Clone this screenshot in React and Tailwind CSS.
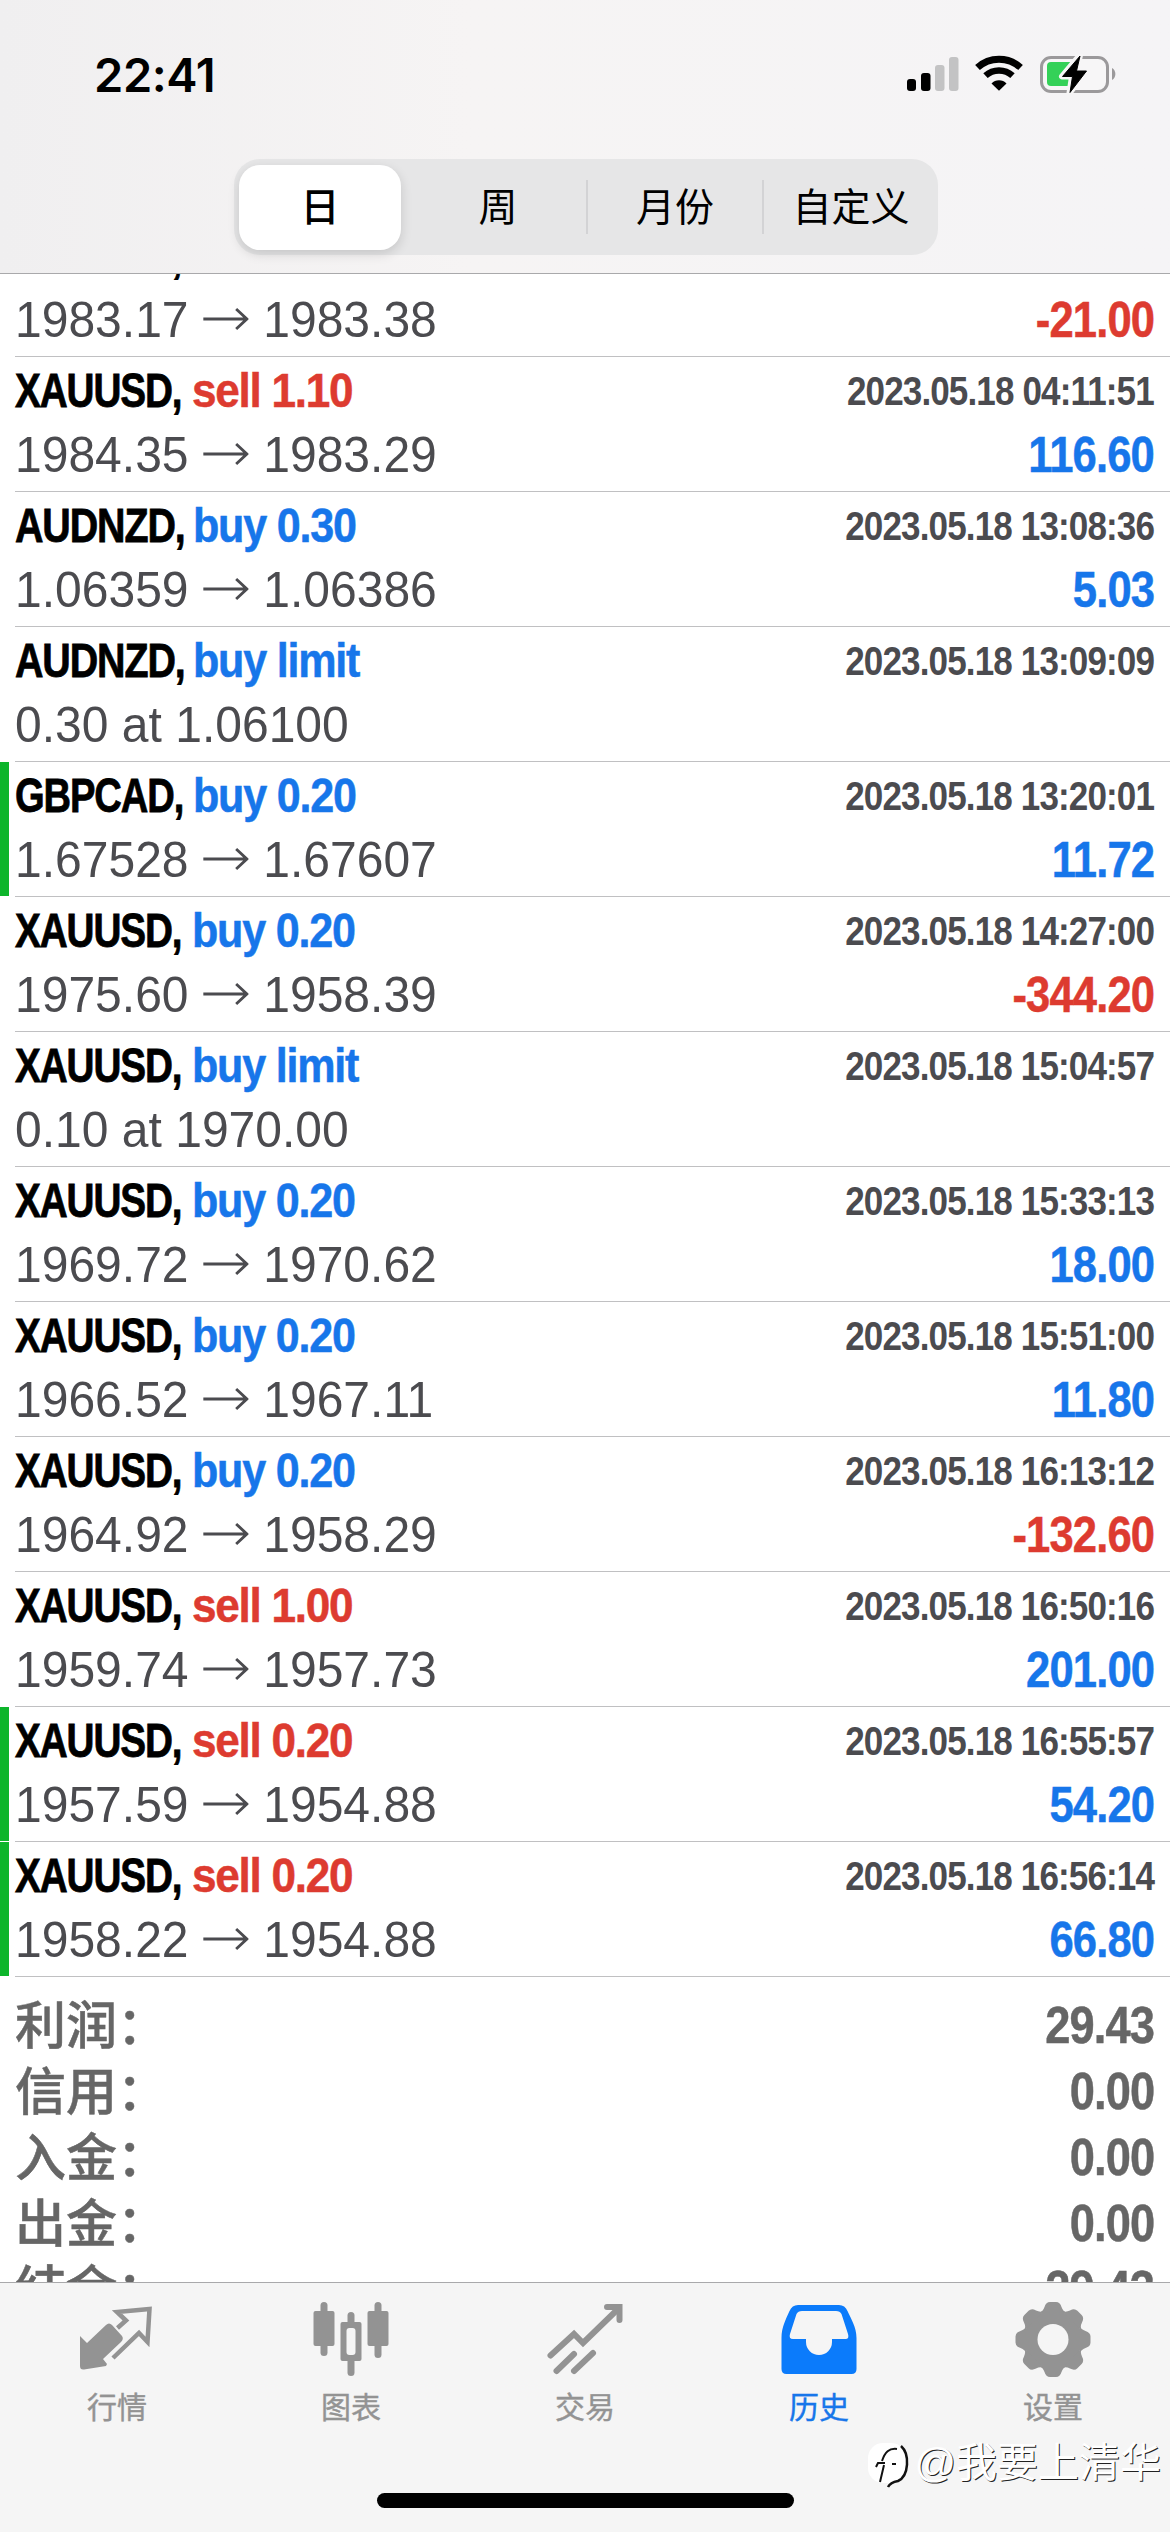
const trades = [
  { symbol: 'XAUUSD', side: 'sell', volume: '1.00', detail: ['1983.17', '1983.38'], time: '2023.05.18 04:10:12', profit: '-21.00' },
  { symbol: 'XAUUSD', side: 'sell', volume: '1.10', detail: ['1984.35', '1983.29'], time: '2023.05.18 04:11:51', profit: '116.60' },
  { symbol: 'AUDNZD', side: 'buy', volume: '0.30', detail: ['1.06359', '1.06386'], time: '2023.05.18 13:08:36', profit: '5.03' },
  { symbol: 'AUDNZD', side: 'buy', volume: 'limit', detail: ['0.30 at 1.06100'], time: '2023.05.18 13:09:09' },
  { symbol: 'GBPCAD', side: 'buy', volume: '0.20', detail: ['1.67528', '1.67607'], time: '2023.05.18 13:20:01', profit: '11.72', marked: true },
  { symbol: 'XAUUSD', side: 'buy', volume: '0.20', detail: ['1975.60', '1958.39'], time: '2023.05.18 14:27:00', profit: '-344.20' },
  { symbol: 'XAUUSD', side: 'buy', volume: 'limit', detail: ['0.10 at 1970.00'], time: '2023.05.18 15:04:57' },
  { symbol: 'XAUUSD', side: 'buy', volume: '0.20', detail: ['1969.72', '1970.62'], time: '2023.05.18 15:33:13', profit: '18.00' },
  { symbol: 'XAUUSD', side: 'buy', volume: '0.20', detail: ['1966.52', '1967.11'], time: '2023.05.18 15:51:00', profit: '11.80' },
  { symbol: 'XAUUSD', side: 'buy', volume: '0.20', detail: ['1964.92', '1958.29'], time: '2023.05.18 16:13:12', profit: '-132.60' },
  { symbol: 'XAUUSD', side: 'sell', volume: '1.00', detail: ['1959.74', '1957.73'], time: '2023.05.18 16:50:16', profit: '201.00' },
  { symbol: 'XAUUSD', side: 'sell', volume: '0.20', detail: ['1957.59', '1954.88'], time: '2023.05.18 16:55:57', profit: '54.20', marked: true },
  { symbol: 'XAUUSD', side: 'sell', volume: '0.20', detail: ['1958.22', '1954.88'], time: '2023.05.18 16:56:14', profit: '66.80', marked: true },
]

const totals = [
  ['利润', '29.43'],
  ['信用', '0.00'],
  ['入金', '0.00'],
  ['出金', '0.00'],
  ['结余', '29.43'],
]

const periods = ['日', '周', '月份', '自定义']

// squeeze of each symbol so they all take the same condensed width
const symbolStyles = {
  XAUUSD: 'w-[177px] scale-x-[0.79]',
  AUDNZD: 'w-[178px] scale-x-[0.805]',
  GBPCAD: 'w-[178px] scale-x-[0.778]',
}

function StatusBar() {
  return (
    <div className="h-[159px] shrink-0 flex justify-between pl-[94px] pr-[54px] pt-[46px]">
      <span className="font-['Inter',sans-serif] font-semibold text-[47px] leading-[58px] tracking-[-0.4px] text-black">22:41</span>
      <svg width="210" height="40" viewBox="0 0 210 40" className="mt-[8px]">
        <rect x="1" y="25" width="9" height="12" rx="3" />
        <rect x="15" y="19" width="9.5" height="18" rx="3" />
        <rect x="29" y="11" width="9.5" height="26" rx="3" fill="#c3c3c4" />
        <rect x="43" y="3" width="9.5" height="34" rx="3" fill="#c3c3c4" />
        <path d="M71.5 13.5 A32 32 0 0 1 114.5 13.5" fill="none" stroke="#000" strokeWidth="7" />
        <path d="M79.5 21.7 A20 20 0 0 1 106.5 21.7" fill="none" stroke="#000" strokeWidth="6.5" />
        <path d="M93 36.8 L85.5 29.5 A10.5 10.5 0 0 1 100.5 29.5 Z" />
        <rect x="135.5" y="3.5" width="66" height="34" rx="9.5" fill="#f7f6f7" stroke="#9b999b" strokeWidth="3" />
        <path d="M206 14 a7 7 0 0 1 0 12 z" fill="#9b999b" />
        <path d="M145 8 H164 V32 H145 a4 4 0 0 1 -4 -4 V12 a4 4 0 0 1 4 -4 z" fill="#34d158" />
        <path d="M174 1 L156 22.5 H166 L163.5 39 L181 16.5 H171 Z" stroke="#f7f6f7" strokeWidth="6" strokeLinejoin="round" />
        <path d="M174 2 L156.5 22.5 H166.5 L164 38.5 L180.5 17 H170.5 Z" stroke="#000" strokeLinejoin="round" />
      </svg>
    </div>
  )
}

function PeriodTabs() {
  return (
    <div className="w-[704px] h-24 ml-[234px] flex rounded-[26px] bg-[#e6e6e7]">
      {periods.map((period, i) => (
        <div key={period} className="flex-1 flex items-center">
          {i === 0 ? (
            <div className="w-[162px] h-[85px] ml-[5px] rounded-[21px] bg-white flex items-center justify-center shadow-[0_4px_12px_rgba(0,0,0,0.14)]">
              <span className="pt-[3px] text-[39px] font-medium text-black">{period}</span>
            </div>
          ) : (
            <>
              <div className={i > 1 ? 'w-0.5 h-[54px] bg-[#d3d3d5]' : 'w-0'} />
              <span className="flex-1 pt-[3px] text-center text-[39px] text-black">{period}</span>
            </>
          )}
        </div>
      ))}
    </div>
  )
}

function Trade({ trade }) {
  const { symbol, side, volume, detail, time, profit, marked } = trade
  return (
    <div className="relative h-[135px] shrink-0 pl-[15px]">
      {marked && <div className="absolute left-0 top-0 w-[9px] h-[134px] bg-[#0db52b]" />}
      <div className="h-[135px] pr-4 border-b border-[#c0c0c2] flex justify-between whitespace-nowrap">
        <div className="pt-1.5">
          <div className="flex h-[63px] leading-[54px] text-[49px] font-bold tracking-[-1.4px]">
            <span className={`text-black origin-left [-webkit-text-stroke:0.8px_#000] ${symbolStyles[symbol]}`}>{symbol},</span>
            <span
              className={side === 'sell'
                ? 'origin-left scale-x-[0.9] text-[#dd3b30] [-webkit-text-stroke:0.5px_#dd3b30]'
                : 'origin-left scale-x-[0.88] text-[#1776ea] [-webkit-text-stroke:0.5px_#1776ea]'}
            >
              {side} {volume}
            </span>
          </div>
          <div className="flex items-center h-[58px] text-[49.5px] text-[#4b4b4f] origin-left scale-x-[0.97]">
            <span>{detail[0]}</span>
            {detail[1] && (
              <>
                <svg width="47" height="26" viewBox="0 0 47 26" className="mx-[15px] -mt-0.5" fill="none" stroke="#4b4b4f" strokeWidth="3">
                  <path d="M0 13 H45 M34 3 L45 13 L34 23" />
                </svg>
                <span>{detail[1]}</span>
              </>
            )}
          </div>
        </div>
        <div className="pt-1.5 text-right font-bold tracking-[-1px]">
          <p className="h-[63px] leading-[56px] text-[40.5px] text-[#4b4b4f] origin-right scale-x-[0.865]">{time}</p>
          <p
            className={`h-[58px] leading-[58px] text-[49.5px] origin-right scale-x-[0.88] ${profit?.startsWith('-')
              ? 'text-[#dd3b30] [-webkit-text-stroke:0.5px_#dd3b30]'
              : 'text-[#1776ea] [-webkit-text-stroke:0.5px_#1776ea]'}`}
          >
            {profit}
          </p>
        </div>
      </div>
    </div>
  )
}

function QuotesIcon() {
  return (
    <svg width="76" height="76" viewBox="0 0 76 76" fill="#939393">
      <path d="M1 34 L8 41 L27 23 Q30 20 33 23 L43 34 Q45 37 42 40 L24 57 L28 62 L27 64 L5 67.5 Q1 68 1 64 Z" />
      <path d="M38.5 26 L47 18.5 L38 10 L70.5 7 L68.5 40 L60 31 L34 56" fill="none" stroke="#939393" strokeWidth="4.5" />
    </svg>
  )
}

function ChartIcon() {
  return (
    <svg width="76" height="76" viewBox="0 0 76 76" fill="#939393">
      <rect x="7.5" y="0" width="7" height="54" rx="3.5" />
      <rect x="0.5" y="9" width="21" height="35" rx="2" />
      <rect x="34.5" y="10" width="7" height="64" rx="3.5" />
      <rect x="27.5" y="20" width="21" height="39" rx="2" />
      <rect x="33.5" y="26" width="9" height="27" rx="3" fill="#f5f5f5" />
      <rect x="61.5" y="0" width="7" height="56" rx="3.5" />
      <rect x="54.5" y="9" width="21" height="35" rx="2" />
    </svg>
  )
}

function TradeIcon() {
  return (
    <svg width="76" height="76" viewBox="0 0 76 76" fill="none" stroke="#939393" strokeWidth="6" strokeLinecap="round">
      <path d="M3.5 53.5 L27 32 L36 41 L71 7" />
      <path d="M60 5 H72.5 V18" />
      <path d="M9.5 69 L27 52 M27 69 L46 51" />
    </svg>
  )
}

function HistoryIcon() {
  return (
    <svg width="76" height="76" viewBox="0 0 76 76">
      <path d="M17 3 H58 Q64 3 66.5 9 C70 17 75.5 25 75.5 36 V67 Q75.5 72 70.5 72 H5.5 Q0.5 72 0.5 67 V36 C0.5 25 5 17 8.5 9 Q11 3 17 3 Z" fill="#0b7bfb" />
      <path d="M21 9 H55 Q59 9 60.5 12 L67 32 Q68.5 37 64.5 37 H51 V40 A13 13 0 0 1 25 40 V37 H12 Q7.5 37 9 32 L15.5 12 Q17 9 21 9 Z" fill="#f5f5f5" />
    </svg>
  )
}

function SettingsIcon() {
  return (
    <svg width="76" height="76" viewBox="0 0 76 76">
      <circle cx="38" cy="37.5" r="29" fill="#939393" />
      {[0, 45, 90, 135, 180, 225, 270, 315].map((angle) => (
        <path
          key={angle}
          d="M24 11 Q28 9.5 29.5 5 Q31 0 35 0 H41 Q45 0 46.5 5 Q48 9.5 52 11 Z"
          fill="#939393"
          transform={`rotate(${angle} 38 37.5)`}
        />
      ))}
      <circle cx="38" cy="37.5" r="15.5" fill="#f5f5f5" />
    </svg>
  )
}

const tabs = [
  { label: '行情', Icon: QuotesIcon },
  { label: '图表', Icon: ChartIcon },
  { label: '交易', Icon: TradeIcon },
  { label: '历史', Icon: HistoryIcon, active: true },
  { label: '设置', Icon: SettingsIcon },
]

function Watermark() {
  return (
    <div className="absolute right-[9px] top-[2435px] flex items-center text-white">
      <svg width="46" height="56" viewBox="0 0 46 56" className="mr-0.5">
        <rect x="2" y="8" width="38" height="40" rx="15" fill="#fff" />
        <path d="M35 11 C44 19 43 41 32 46 C27 47 24 48 22 52" fill="none" stroke="#111" strokeWidth="2.5" />
        <path d="M14 47 L18 30 M16 26 C19 17 23 13 31 14" fill="none" stroke="#111" strokeWidth="2" />
        <path d="M10 32 L12 28 H19 M26 29 H30" fill="none" stroke="#111" strokeWidth="2" />
      </svg>
      <span className="text-[41px] leading-[56px] [text-shadow:1px_1px_0.5px_#222]">@我要上清华</span>
    </div>
  )
}

export default function App() {
  return (
    <div className="relative w-[1170px] h-[2532px] overflow-hidden bg-white flex flex-col font-['Liberation_Sans','Noto_Sans_CJK_SC',sans-serif]">
      <header className="h-[274px] shrink-0 bg-linear-to-r from-[#f0eff0] via-[#f6f4f4] via-40% to-[#f5f4f6] border-b border-[#a9a9ab]">
        <StatusBar />
        <PeriodTabs />
      </header>

      {/* Scrolled list, the first row is partly under the header */}
      <main className="flex-1 min-h-0 overflow-hidden flex flex-col justify-start">
        <div className="-mt-[52px] flex flex-col">
          {trades.map((trade) => (
            <Trade key={trade.time} trade={trade} />
          ))}
        </div>
        <div className="pt-[15px] pl-[15px] pr-4 text-[#666]">
          {totals.map(([label, value]) => (
            <div key={label} className="h-[66px] flex justify-between items-center whitespace-nowrap">
              <span className="-mt-1.5 font-['Noto_Sans_CJK_SC',sans-serif] font-medium text-[51px] leading-[66px] [-webkit-text-stroke:0.5px_#666]">{label}：</span>
              <span className="font-bold text-[52px] leading-[66px] tracking-[-1px] origin-right scale-x-[0.87] [-webkit-text-stroke:0.5px_#666]">{value}</span>
            </div>
          ))}
        </div>
      </main>

      <nav className="h-[250px] shrink-0 bg-[#f5f5f5] border-t border-[#a9a9ab]">
        <div className="flex pt-[19px] h-[210px]">
          {tabs.map(({ label, Icon, active }) => (
            <div key={label} className={`flex-1 flex flex-col items-center ${active ? 'text-[#1776ea]' : 'text-[#939393]'}`}>
              <Icon />
              <span className="mt-2 text-[30px] leading-[44px] [-webkit-text-stroke:0.4px_currentColor]">{label}</span>
            </div>
          ))}
        </div>
        <div className="w-[417px] h-[15px] mx-auto rounded-full bg-black" />
      </nav>

      <Watermark />
    </div>
  )
}
